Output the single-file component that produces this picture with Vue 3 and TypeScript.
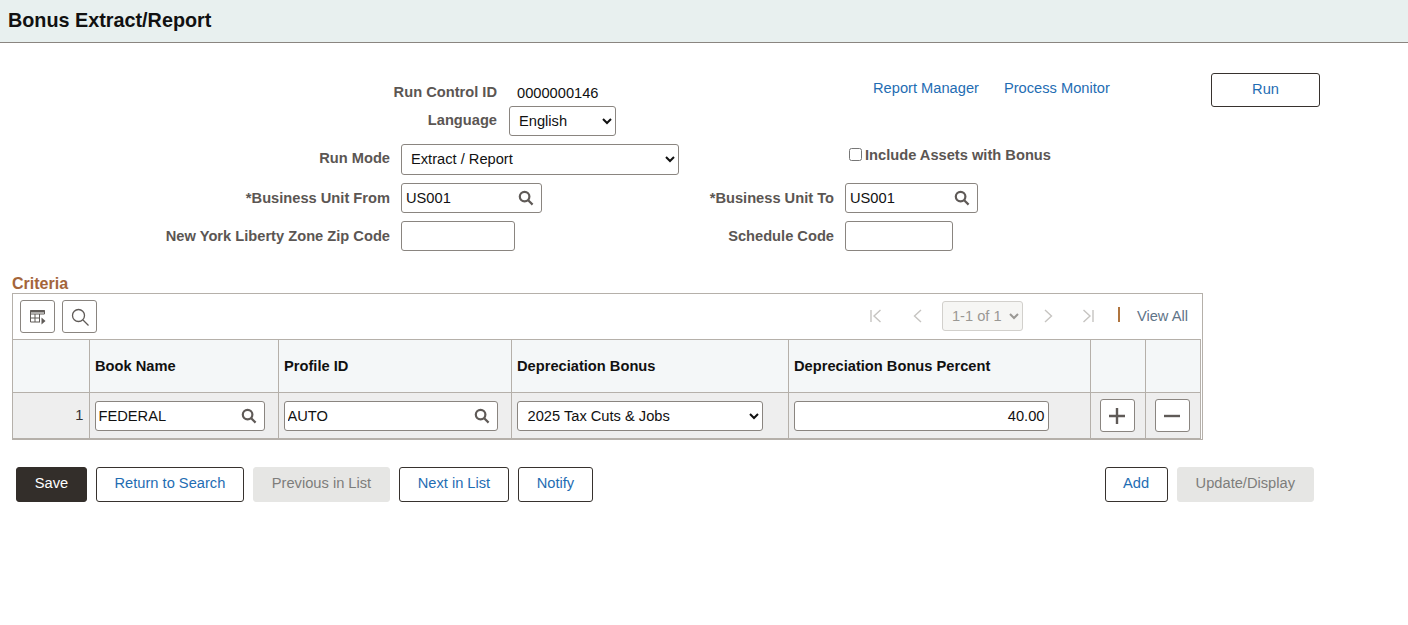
<template>
  <div class="page">
    <header class="title-bar">
      <h1>Bonus Extract/Report</h1>
    </header>

    <form class="form" @submit.prevent>
      <div class="row row-id">
        <span class="label wide">Run Control ID</span>
        <span class="value">0000000146</span>
        <a class="link report" href="#">Report Manager</a>
        <a class="link monitor" href="#">Process Monitor</a>
        <button class="btn run" type="button">Run</button>
      </div>

      <div class="row row-lang">
        <label class="label wide">Language</label>
        <select class="field lang">
          <option>English</option>
        </select>
      </div>

      <div class="row row-mode">
        <label class="label left">Run Mode</label>
        <select class="field mode">
          <option>Extract / Report</option>
        </select>
        <label class="check">
          <input type="checkbox" />
          <span>Include Assets with Bonus</span>
        </label>
      </div>

      <div class="row row-field">
        <label class="label left">*Business Unit From</label>
        <div class="prompt unit-from">
          <input value="US001" />
          <svg class="lens" viewBox="0 0 16 16"><circle cx="6.6" cy="6.6" r="4.8" /><path d="M10.2 10.2 14.6 14.6" /></svg>
        </div>
        <label class="label right">*Business Unit To</label>
        <div class="prompt unit-to">
          <input value="US001" />
          <svg class="lens" viewBox="0 0 16 16"><circle cx="6.6" cy="6.6" r="4.8" /><path d="M10.2 10.2 14.6 14.6" /></svg>
        </div>
      </div>

      <div class="row row-field">
        <label class="label left">New York Liberty Zone Zip Code</label>
        <input class="field zip" />
        <label class="label right to-sched">Schedule Code</label>
        <input class="field sched" />
      </div>
    </form>

    <section class="criteria">
      <h2>Criteria</h2>
      <div class="grid-box">
        <div class="toolbar">
          <button class="tool" type="button" aria-label="Personalize">
            <svg width="18" height="18" viewBox="0 0 18 18">
              <path class="tool-fill" d="M1.5 2h14v2.500h-14z" />
              <path class="tool-line thin" d="M1.5 2.500h14v3.500M1.500 2.500v11.500h9.500M1.500 6h14M1.500 10h9.500M6 6v8M10.500 6v8" />
              <path class="tool-fill" d="M12.500 9.500l4 3.500-4 3.500z" />
            </svg>
          </button>
          <button class="tool" type="button" aria-label="Find">
            <svg width="20" height="20" viewBox="0 0 20 20">
              <circle class="tool-line" cx="8.500" cy="8.500" r="6" />
              <path class="tool-line" d="M13 13l5.500 5.500" />
            </svg>
          </button>

          <div class="pager">
            <svg class="page-icon first" viewBox="0 0 14 14"><path d="M2 1v12M11.500 1 5 7l6.500 6" /></svg>
            <svg class="page-icon prev" viewBox="0 0 14 14"><path d="M10 1 3.500 7l6.500 6" /></svg>
            <select class="pager-select" disabled>
              <option>1-1 of 1</option>
            </select>
            <svg class="page-icon next" viewBox="0 0 14 14"><path d="M4 1l6.500 6L4 13" /></svg>
            <svg class="page-icon last" viewBox="0 0 14 14"><path d="M2.500 1 9 7l-6.500 6M12 1v12" /></svg>
            <span class="divider"></span>
            <a class="view-all" href="#">View All</a>
          </div>
        </div>

        <table class="grid">
          <colgroup>
            <col v-for="w in colWidths" :key="w.id" :style="{ width: w.px + 'px' }" />
          </colgroup>
          <thead>
            <tr>
              <th></th>
              <th>Book Name</th>
              <th>Profile ID</th>
              <th>Depreciation Bonus</th>
              <th>Depreciation Bonus Percent</th>
              <th></th>
              <th></th>
            </tr>
          </thead>
          <tbody>
            <tr>
              <td class="num">1</td>
              <td>
                <div class="prompt book">
                  <input value="FEDERAL" />
                  <svg class="lens" viewBox="0 0 16 16"><circle cx="6.6" cy="6.6" r="4.8" /><path d="M10.2 10.2 14.6 14.6" /></svg>
                </div>
              </td>
              <td>
                <div class="prompt profile">
                  <input value="AUTO" />
                  <svg class="lens" viewBox="0 0 16 16"><circle cx="6.6" cy="6.6" r="4.8" /><path d="M10.2 10.2 14.6 14.6" /></svg>
                </div>
              </td>
              <td>
                <select class="field bonus">
                  <option>2025 Tax Cuts &amp; Jobs</option>
                </select>
              </td>
              <td><input class="field percent" value="40.00" /></td>
              <td class="action">
                <button class="tool square" type="button" aria-label="Add row">
                  <svg width="18" height="18" viewBox="0 0 18 18"><path class="act" d="M9 1v16M1 9h16" /></svg>
                </button>
              </td>
              <td class="action">
                <button class="tool square" type="button" aria-label="Delete row">
                  <svg width="18" height="18" viewBox="0 0 18 18"><path class="act" d="M1 9h16" /></svg>
                </button>
              </td>
            </tr>
          </tbody>
        </table>
      </div>
    </section>

    <footer class="actions">
      <button class="btn primary" type="button">Save</button>
      <button class="btn" type="button">Return to Search</button>
      <button class="btn off" type="button" disabled>Previous in List</button>
      <button class="btn" type="button">Next in List</button>
      <button class="btn notify" type="button">Notify</button>
      <span class="spacer"></span>
      <button class="btn" type="button">Add</button>
      <button class="btn off" type="button" disabled>Update/Display</button>
    </footer>
  </div>
</template>

<script setup lang="ts">
const colWidths = [
  { id: "num", px: 76 },
  { id: "book", px: 189 },
  { id: "profile", px: 233 },
  { id: "bonus", px: 277 },
  { id: "percent", px: 302 },
  { id: "add", px: 55 },
  { id: "del", px: 55 }
]
</script>

<style>
html,
body {
  margin: 0;
  background: #fff;
}
</style>

<style scoped>
.page {
  width: 1408px;
  height: 625px;
  overflow: hidden;
  font-family: "Liberation Sans", Arial, sans-serif;
  font-size: 14.67px;
  color: #000;
}

.title-bar {
  height: 42px;
  background: #e8f0ef;
  border-bottom: 1px solid #8a8580;
  display: flex;
  align-items: center;
  padding-left: 8px;
}

.title-bar h1 {
  margin: 0 0 2px;
  font-size: 19.8px;
  font-weight: bold;
  color: #111;
}

.form {
  padding-top: 30px;
}

.row {
  display: flex;
  align-items: center;
}

.row-id {
  height: 33px;
  align-items: flex-start;
}

.row-lang {
  height: 30px;
}

.row-mode {
  height: 31px;
  margin-top: 8px;
}

.row-field {
  height: 30px;
  margin-top: 8px;
}

.label {
  font-weight: bold;
  color: #5b5653;
  text-align: right;
  flex: none;
}

.wide {
  width: 497px;
}

.row-id .label {
  margin-top: 11px;
}

.row-lang .label {
  margin-top: -3px;
}

.row-mode .label.left {
  margin-top: -4px;
}

.left {
  width: 390px;
}

.value {
  margin: 12px 0 0 20px;
  width: 82px;
  flex: none;
  color: #111;
}

.link,
.view-all {
  color: #1f6db3;
  text-decoration: none;
}

.link {
  margin-top: 7px;
  flex: none;
}

.report {
  margin-left: 274px;
}

.monitor {
  margin-left: 25px;
}

.run {
  margin-left: auto;
  margin-right: 88px;
  width: 109px;
}

.field,
.prompt {
  box-sizing: border-box;
  height: 30px;
  border: 1px solid #8a8580;
  border-radius: 3px;
  background: #fff;
  font: 14.67px "Liberation Sans", Arial, sans-serif;
  color: #111;
}

.lang {
  margin-left: 12px;
  width: 107px;
  padding-left: 5px;
}

.mode {
  margin-left: 11px;
  height: 31px;
  width: 278px;
  padding-left: 5px;
  padding-bottom: 2px;
}

.check {
  margin: -10px 0 0 170px;
  display: flex;
  align-items: center;
  gap: 3px;
  font-weight: bold;
  color: #5b5653;
}

.check input {
  margin: 0;
  width: 13px;
  height: 13px;
}

.prompt {
  display: flex;
  align-items: center;
  padding: 0 7px 0 4px;
}

.prompt input {
  min-width: 0;
  flex: 1;
  border: 0;
  outline: 0;
  padding: 0;
  background: transparent;
  font: inherit;
  color: inherit;
}

.lens {
  width: 16px;
  height: 16px;
  flex: none;
  fill: none;
  stroke: #5f5a57;
  stroke-width: 2.2;
}

.unit-from {
  margin-left: 11px;
  width: 141px;
}

.right {
  width: 292px;
}

.unit-to {
  margin-left: 11px;
  width: 133px;
}

.zip {
  margin-left: 11px;
  width: 114px;
}

.to-sched {
  width: 319px;
}

.sched {
  margin-left: 11px;
  width: 108px;
}

.criteria {
  margin: 21px 0 0 12px;
  width: 1191px;
}

.criteria h2 {
  margin: 0;
  height: 21px;
  line-height: 23px;
  font-size: 16px;
  font-weight: bold;
  color: #a4653a;
}

.grid-box {
  box-sizing: border-box;
  border: 1px solid #b5b0aa;
  height: 147px;
}

.toolbar {
  box-sizing: border-box;
  height: 45px;
  display: flex;
  align-items: flex-start;
  gap: 7px;
  padding: 6px 14px 0 7px;
}

.tool {
  box-sizing: border-box;
  width: 35px;
  height: 33px;
  padding: 0;
  display: flex;
  align-items: center;
  justify-content: center;
  background: #fff;
  border: 1px solid #8a8580;
  border-radius: 3px;
}

.tool-line {
  fill: none;
  stroke: #5f5a57;
  stroke-width: 1.3;
}

.tool-line.thin {
  stroke-width: 1;
}

.tool-fill {
  fill: #5f5a57;
}

.act {
  fill: none;
  stroke: #5f5a57;
  stroke-width: 2.4;
}

.pager {
  margin-left: auto;
  height: 31px;
  display: flex;
  align-items: center;
}

.page-icon {
  width: 14px;
  height: 14px;
  fill: none;
  stroke: #c6c4c1;
  stroke-width: 1.4;
  flex: none;
}

.prev {
  margin-left: 28px;
}

.pager-select {
  box-sizing: border-box;
  margin-left: 17px;
  width: 81px;
  height: 30px;
  padding-left: 5px;
  border: 1px solid #d2d0cc;
  border-radius: 3px;
  background: #f6f6f4;
  color: #9a9894;
  opacity: 1;
  font: 14.67px "Liberation Sans", Arial, sans-serif;
}

.next {
  margin-left: 18px;
}

.last {
  margin-left: 26px;
}

.divider {
  width: 2px;
  height: 15px;
  margin: -2px 17px 0 23px;
  background: #b0753f;
}

.view-all {
  color: #5f7488;
}

.grid {
  table-layout: fixed;
  border-collapse: collapse;
  width: 1187px;
}

.grid th,
.grid td {
  box-sizing: border-box;
  border: 1px solid #b5b0aa;
  padding: 0 5px;
}

.grid tr > :first-child {
  border-left: 0;
}

.grid th {
  height: 53px;
  background: #f4f7f8;
  text-align: left;
  font-weight: bold;
  color: #111;
  padding-left: 5.5px;
}

.grid td {
  height: 46px;
  padding-top: 1px;
  background: #eeeeee;
  border-bottom: 2px solid #b5b0aa;
}

.grid td.num {
  text-align: right;
  color: #333;
  padding-bottom: 2px;
}

.grid td.action {
  padding: 1px 0 0 9px;
}

.square {
  height: 33px;
}

.book {
  width: 170px;
  padding-left: 3px;
}

.profile {
  width: 214px;
  padding-left: 3px;
}

.bonus {
  width: 246px;
  padding-left: 6px;
}

.percent {
  width: 255px;
  padding: 0 3px;
  text-align: right;
}

.actions {
  display: flex;
  gap: 9px;
  margin: 27px 94px 0 16px;
}

.spacer {
  flex: 1;
}

.btn {
  box-sizing: border-box;
  height: 35px;
  padding: 0 17.5px 3px;
  border: 1px solid #37322e;
  border-radius: 3px;
  background: #fff;
  color: #1f6db3;
  font: 14.67px "Liberation Sans", Arial, sans-serif;
}

.run {
  height: 34px;
  padding: 0 0 2px;
  flex: none;
}

.primary {
  background: #332e2a;
  border-color: #332e2a;
  color: #fff;
  min-width: 71px;
}

.notify {
  padding: 0 18px 3px;
}

.off {
  background: #e6e6e4;
  border-color: #e6e6e4;
  color: #7d7d7b;
  padding: 0 18px 3px;
}
</style>
